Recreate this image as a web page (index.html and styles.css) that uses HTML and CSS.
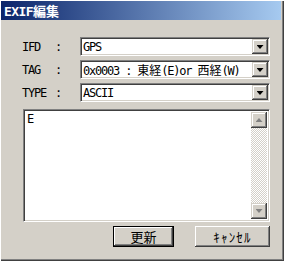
FILE: index.html
```html
<!DOCTYPE html>
<html lang="ja">
<head>
    <meta charset="UTF-8">
    <title>EXIF編集</title>
    <link rel="stylesheet" href="styles.css">
</head>
<body>
    <div class="window">
        <div class="titlebar">
            <span class="title">EXIF<span class="w">編集</span></span>
        </div>

        <div class="client">
            <div class="fields">
                <div class="row">
                    <span class="label">IFD</span><span class="colon">:</span>
                    <div class="combo">
                        <span class="value">GPS</span>
                        <span class="drop"><i class="arrow"></i></span>
                    </div>
                </div>
                <div class="row">
                    <span class="label">TAG</span><span class="colon">:</span>
                    <div class="combo">
                        <span class="value">0x0003 : <span class="w">東経</span>(E)or <span class="w">西経</span>(W)</span>
                        <span class="drop"><i class="arrow"></i></span>
                    </div>
                </div>
                <div class="row">
                    <span class="label">TYPE</span><span class="colon">:</span>
                    <div class="combo">
                        <span class="value">ASCII</span>
                        <span class="drop"><i class="arrow"></i></span>
                    </div>
                </div>
            </div>

            <!-- value editor -->
            <div class="memo">
                <div class="memo-text">E</div>
                <div class="scrollbar">
                    <span class="sb-btn"><i class="arrow-up"></i></span>
                    <span class="sb-track"></span>
                    <span class="sb-btn"><i class="arrow-down"></i></span>
                </div>
            </div>

            <div class="buttons">
                <button class="btn default"><span class="w">更新</span></button>
                <button class="btn"><span class="w kana">ｷｬﾝｾﾙ</span></button>
            </div>
        </div>
    </div>
</body>
</html>
```

FILE: styles.css
```css
* {
    margin: 0;
    padding: 0;
    box-sizing: border-box;
}

body {
    width: 284px;
    height: 261px;
    background-color: #ffffff;
    font-family: "DejaVu Sans Mono", monospace;
    font-size: 12px;
    letter-spacing: -1.2px;
    color: #000000;
}

.w {
    font-family: "Noto Sans CJK JP", sans-serif;
    letter-spacing: 0;
}

.w.kana {
    letter-spacing: 1.2px;
}

.window {
    width: 284px;
    height: 261px;
    padding: 1px 3px 3px 1px;
    background-color: #d4d0c8;
    box-shadow: inset 1px 1px #ffffff, inset -1px -1px #404040, inset -2px -2px #808080;
    display: flex;
    flex-direction: column;
}

.titlebar {
    height: 19px;
    background: linear-gradient(to right, #0a246a, #a6caf0);
    display: flex;
    align-items: center;
    padding-left: 3px;
}

.title {
    color: #ffffff;
    font-weight: bold;
    font-size: 13px;
    letter-spacing: -0.6px;
}

.client {
    flex: 1;
    padding: 17px 11px 0 21px;
    display: flex;
    flex-direction: column;
}

.fields {
    display: flex;
    flex-direction: column;
    gap: 4px;
}

.row {
    height: 19px;
    display: flex;
    align-items: center;
}

.label {
    width: 33px;
}

.colon {
    width: 25px;
}

.combo {
    flex: 1;
    height: 19px;
    background-color: #ffffff;
    border-top: 1px solid #808080;
    border-left: 1px solid #808080;
    border-bottom: 1px solid #ffffff;
    border-right: 1px solid #ffffff;
    box-shadow: inset 1px 1px #404040, inset -1px -1px #d4d0c8;
    display: flex;
    align-items: center;
    padding: 1px;
}

.value {
    flex: 1;
    padding-left: 1px;
    white-space: nowrap;
    overflow: hidden;
}

.drop {
    width: 16px;
    height: 15px;
    background-color: #d4d0c8;
    box-shadow: inset -1px -1px #404040, inset 1px 1px #d4d0c8, inset -2px -2px #808080, inset 2px 2px #ffffff;
    display: flex;
    align-items: center;
    justify-content: center;
}

.arrow {
    width: 7px;
    height: 4px;
    background-color: #000000;
    clip-path: polygon(0 0, 100% 0, 50% 100%);
    margin-top: 1px;
}

.memo {
    margin-top: 7px;
    margin-left: 1px;
    height: 113px;
    background-color: #ffffff;
    border-top: 1px solid #808080;
    border-left: 1px solid #808080;
    border-bottom: 1px solid #ffffff;
    border-right: 1px solid #ffffff;
    box-shadow: inset 1px 1px #404040, inset -1px -1px #d4d0c8;
    display: flex;
    padding: 2px;
}

.memo-text {
    flex: 1;
    padding-left: 1px;
    line-height: 14px;
}

.scrollbar {
    width: 16px;
    display: flex;
    flex-direction: column;
}

.sb-btn {
    height: 16px;
    background-color: #d4d0c8;
    box-shadow: inset -1px -1px #404040, inset 1px 1px #d4d0c8, inset -2px -2px #808080, inset 2px 2px #ffffff;
    display: flex;
    align-items: center;
    justify-content: center;
}

.sb-track {
    flex: 1;
    background: repeating-conic-gradient(#ffffff 0 25%, #d4d0c8 0 50%) 0 0 / 2px 2px;
}

.arrow-up,
.arrow-down {
    width: 7px;
    height: 4px;
    background-color: #808080;
}

.arrow-up {
    clip-path: polygon(50% 0, 100% 100%, 0 100%);
}

.arrow-down {
    clip-path: polygon(0 0, 100% 0, 50% 100%);
}

.buttons {
    margin-top: 4px;
    display: flex;
    justify-content: flex-end;
    gap: 21px;
}

.btn {
    width: 75px;
    height: 21px;
    background-color: #d4d0c8;
    border: none;
    box-shadow: inset -1px -1px #404040, inset 1px 1px #ffffff, inset -2px -2px #808080, inset 2px 2px #d4d0c8;
    font-size: 13px;
    color: #000000;
}

.btn.default {
    width: 61px;
    border: 1px solid #000000;
}
```
